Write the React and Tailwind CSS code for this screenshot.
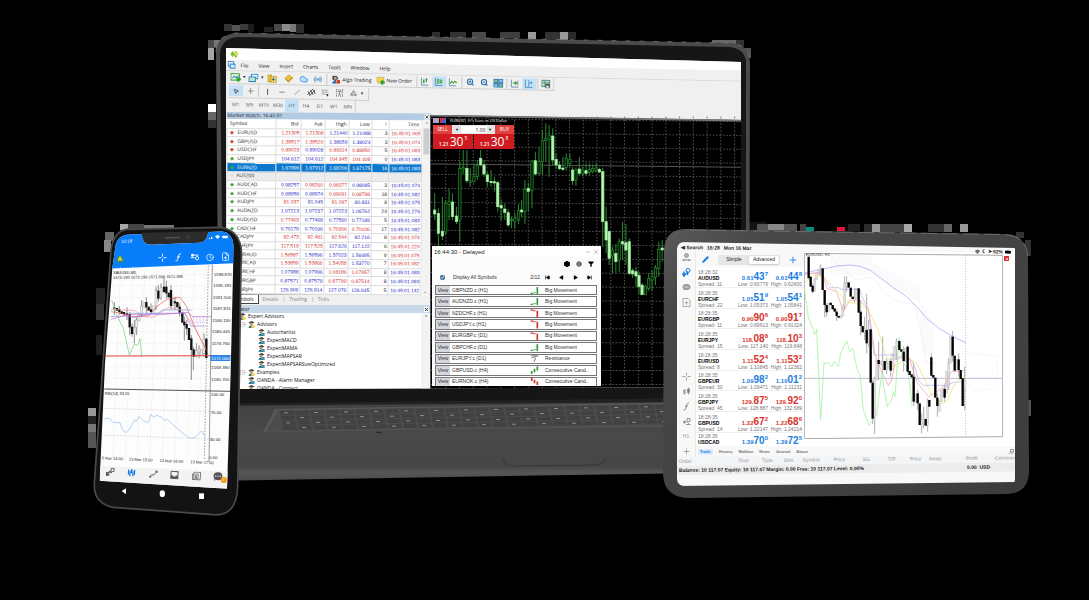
import React from "react";
import {
  ZoomIn, ZoomOut, MousePointer2, Plus, Minus, Slash, Cloud, Radio, BookMarked, Grid2x2, Type, Shapes, Settings, Circle,
  Filter, SkipBack, SkipForward, Play, Pencil, FilePlus, Clock, Wifi, Layers, Save, X,
} from "lucide-react";

const symbols = [
  ["EURUSD", "d", "1.21305r", "1.21308r", "1.21440b", "1.21088b", "3", "16:45:01.065r"],
  ["GBPUSD", "d", "1.38517r", "1.38520r", "1.38659b", "1.38024b", "3", "16:45:01.074r"],
  ["USDCHF", "d", "0.89023r", "0.89028b", "0.89314r", "0.88950r", "5", "16:45:01.083r"],
  ["USDJPY", "u", "104.612b", "104.612b", "104.845r", "104.408r", "0", "16:45:01.083b"],
  ["EURNZD", "u", "1.67896w", "1.67912w", "1.68206w", "1.67175w", "16", "16:45:01.083w"],
  ["AUS200", "n", "", "", "", "", "", ""],
  ["AUDCAD", "u", "0.98257b", "0.98260r", "0.98377r", "0.98085b", "3", "16:45:01.074b"],
  ["AUDCHF", "u", "0.68956b", "0.68974b", "0.69091r", "0.68798r", "18", "16:45:01.082b"],
  ["AUDJPY", "u", "81.037r", "81.045b", "81.097r", "80.831b", "8", "16:45:01.075b"],
  ["AUDNZD", "u", "1.07213b", "1.07237b", "1.07223b", "1.06762b", "24", "16:45:01.276b"],
  ["AUDUSD", "u", "0.77463r", "0.77468b", "0.77560b", "0.77189b", "5", "16:45:01.083b"],
  ["CADCHF", "u", "0.70179b", "0.70196b", "0.70306r", "0.70106r", "17", "16:45:01.082b"],
  ["CADJPY", "d", "82.473r", "82.481r", "82.544r", "82.216b", "8", "16:45:01.074r"],
  ["CHFJPY", "d", "117.519r", "117.525r", "117.626b", "117.122b", "6", "16:45:01.220r"],
  ["EURAUD", "u", "1.56587r", "1.56596b", "1.57023b", "1.56495b", "9", "16:45:01.075r"],
  ["EURCAD", "d", "1.53859r", "1.53866r", "1.54058r", "1.53770b", "7", "16:45:01.082r"],
  ["EURCHF", "u", "1.07988b", "1.07996b", "1.08186r", "1.07957r", "8", "16:45:01.083b"],
  ["EURGBP", "u", "0.87571b", "0.87579b", "0.87799r", "0.87514r", "8", "16:45:01.083b"],
  ["EURJPY", "u", "126.909b", "126.914b", "127.076b", "126.645b", "5", "16:45:01.142b"],
];
const ink = { r: "text-[#d02c2c]", b: "text-[#2626c4]", w: "text-white" };
const dot = { d: "text-[#d9482b]", u: "text-[#2fae2f]", n: "text-[#888]" };

const signals = [
  ["GBPNZD.c (H1)", "Big Movement", "up"], ["AUDNZD.c (H1)", "Big Movement", "up"],
  ["NZDCHF.c (H1)", "Big Movement", "down"], ["USDJPY.c (H1)", "Big Movement", "down"],
  ["EURGBP.c (D1)", "Big Movement", "down"], ["GBPCHF.c (D1)", "Big Movement", "up"],
  ["EURJPY.c (D1)", "Resistance", "flat"], ["GBPUSD.c (H4)", "Consecutive Cand..", "cup"],
  ["EURNOK.c (H4)", "Consecutive Cand..", "cdown"],
];

const quotes = [
  ["AUDUSD", "18:28:32", 11, ["0.61", "43", "7"], ["0.61", "44", "8"], "0.60779", "0.62800", 1],
  ["EURCHF", "18:28:35", 22, ["1.05", "51", "9"], ["1.05", "54", "1"], "1.05373", "1.05841", 1],
  ["EURGBP", "18:28:35", 11, ["0.90", "90", "6"], ["0.90", "91", "7"], "0.89613", "0.91324", 0],
  ["EURJPY", "18:28:35", 15, ["118.", "08", "8"], ["118.", "10", "3"], "117.140", "119.848", 0],
  ["EURUSD", "18:28:35", 8, ["1.11", "52", "4"], ["1.11", "53", "2"], "1.10845", "1.12362", 0],
  ["GBPEUR", "18:28:35", 30, ["1.09", "98", "2"], ["1.10", "01", "2"], "1.09471", "1.11231", 1],
  ["GBPJPY", "18:28:35", 45, ["129.", "87", "5"], ["129.", "92", "0"], "128.887", "132.689", 0],
  ["GBPUSD", "18:28:35", 14, ["1.22", "67", "2"], ["1.22", "68", "6"], "1.22147", "1.24214", 0],
  ["USDCAD", "18:28:35", null, ["1.39", "70", "0"], ["1.39", "72", "5"], null, null, 1],
];

// x, high, low, body top, body bottom, filled
const laptopCandles = [
  [27, 520, 600, 570, 582, 1], [38, 565, 680, 580, 640, 1], [50, 530, 660, 634, 648, 1], [60, 540, 645, 550, 636, 0],
  [70, 507, 600, 545, 553, 0], [80, 520, 600, 546, 590, 1], [92, 560, 612, 588, 605, 1], [102, 425, 665, 445, 600, 0],
  [112, 390, 462, 443, 447, 0], [123, 390, 490, 445, 482, 1], [133, 445, 500, 483, 487, 0], [144, 430, 488, 470, 485, 0],
  [154, 420, 480, 436, 470, 0], [164, 390, 437, 415, 435, 1], [174, 420, 470, 435, 462, 1], [184, 455, 500, 465, 485, 1],
  [195, 450, 500, 484, 488, 1], [205, 470, 515, 485, 489, 1], [215, 482, 575, 488, 560, 1], [225, 538, 600, 556, 564, 1],
  [236, 550, 600, 567, 577, 1], [246, 568, 622, 578, 615, 1], [256, 590, 625, 598, 602, 0], [266, 580, 626, 594, 604, 0],
  [277, 552, 612, 572, 600, 0], [286, 540, 592, 570, 576, 1], [296, 480, 612, 508, 575, 0], [306, 488, 575, 505, 514, 1],
  [317, 420, 565, 423, 512, 0], [327, 395, 465, 422, 462, 1], [338, 380, 465, 425, 460, 0], [348, 330, 465, 362, 425, 0],
  [358, 310, 425, 356, 362, 0], [368, 315, 470, 345, 358, 0], [379, 325, 437, 348, 420, 1], [389, 400, 447, 418, 435, 1],
  [399, 425, 450, 435, 446, 1], [409, 410, 452, 444, 448, 1], [419, 400, 452, 415, 442, 0], [430, 400, 440, 418, 430, 0],
  [438, 440, 495, 450, 482, 1], [448, 442, 497, 450, 480, 0], [458, 412, 465, 447, 460, 1], [468, 440, 468, 450, 460, 0],
  [478, 430, 465, 452, 460, 1], [488, 430, 465, 448, 458, 0], [498, 433, 460, 446, 455, 0], [508, 430, 458, 444, 452, 0],
  [518, 443, 460, 448, 456, 1], [528, 443, 680, 455, 605, 1], [538, 560, 700, 605, 660, 1], [547, 632, 735, 634, 715, 1],
  [557, 680, 760, 690, 708, 0], [567, 672, 760, 700, 725, 1], [577, 655, 755, 665, 720, 0], [587, 605, 720, 665, 672, 1],
  [597, 612, 735, 668, 690, 1], [607, 655, 765, 665, 760, 1], [617, 745, 775, 752, 762, 1], [627, 740, 800, 755, 768, 1],
  [636, 755, 822, 766, 800, 1], [645, 790, 826, 795, 824, 1], [655, 795, 826, 800, 824, 0], [665, 760, 812, 776, 805, 0],
  [675, 750, 812, 770, 780, 0], [685, 735, 795, 742, 772, 0], [695, 665, 770, 688, 745, 0], [705, 660, 725, 684, 690, 1],
  [715, 670, 705, 685, 693, 1],
];

const tabletBlack = [
  [26, 110, 175], [32, 170, 200], [38, 197, 215], [68, 145, 210], [74, 210, 255], [80, 255, 277], [92, 248, 255], [98, 255, 268],
  [104, 265, 275], [110, 275, 288], [116, 288, 293], [146, 187, 203], [152, 203, 230], [158, 230, 237], [176, 205, 278],
  [182, 275, 318], [188, 318, 337], [200, 330, 370], [212, 328, 488], [218, 488, 596], [236, 420, 432], [254, 423, 450],
  [272, 423, 452], [298, 363, 390], [304, 388, 395], [311, 395, 423], [323, 380, 455], [329, 453, 465], [335, 463, 472],
  [341, 470, 545], [353, 520, 550], [359, 550, 615], [377, 597, 617], [388, 540, 560], [394, 412, 467], [400, 465, 473],
  [406, 473, 533], [412, 533, 558], [434, 507, 533], [458, 350, 407], [464, 407, 452], [476, 418, 450], [482, 450, 477], [488, 475, 558],
];
const tabletGrey = [
  [44, 175, 215], [50, 165, 180], [56, 150, 165], [62, 143, 150], [86, 250, 275], [122, 285, 295], [128, 255, 290], [134, 190, 255],
  [140, 187, 200], [164, 232, 240], [170, 205, 235], [194, 325, 337], [206, 328, 372], [224, 475, 590], [230, 420, 480],
  [242, 425, 435], [248, 423, 435], [260, 430, 450], [266, 423, 445], [278, 400, 450], [284, 380, 420], [290, 365, 385],
  [317, 385, 425], [347, 522, 547], [365, 600, 617], [371, 597, 610], [383, 545, 615], [418, 540, 575], [424, 510, 545],
  [430, 505, 530], [440, 455, 520], [446, 430, 500], [452, 350, 430], [470, 418, 452], [494, 480, 500],
];
const tabletWicks = [
  [38, 190, 220], [62, 133, 170], [74, 210, 292], [80, 250, 290], [110, 268, 303], [134, 168, 270], [140, 170, 215], [164, 205, 248],
  [182, 240, 345], [194, 290, 360], [200, 222, 400], [206, 300, 380], [218, 480, 612], [224, 470, 642], [236, 365, 480],
  [248, 350, 460], [260, 415, 462], [272, 415, 470], [290, 355, 420], [311, 380, 455], [323, 375, 460], [341, 430, 558],
  [353, 510, 570], [365, 580, 640], [371, 560, 625], [383, 535, 635], [394, 400, 470], [412, 520, 590], [434, 495, 545],
  [446, 415, 510], [458, 333, 425], [476, 400, 470], [494, 440, 570],
];

const phoneBlack = [
  [88, 262, 266], [96, 264, 272], [103, 268, 276], [110, 274, 282], [117, 276, 284], [126, 280, 284], [134, 282, 322], [141, 320, 342],
  [184, 246, 262], [191, 260, 272], [198, 268, 276], [220, 212, 236], [237, 200, 216], [244, 200, 220], [251, 218, 232],
  [258, 210, 258], [270, 244, 250], [277, 246, 262], [284, 260, 278], [292, 278, 308], [298, 305, 316], [305, 312, 326],
  [312, 324, 360], [319, 355, 390], [326, 388, 410], [364, 356, 414],
];
const phoneGrey = [[148, 322, 340], [155, 300, 322], [162, 282, 304], [170, 258, 284], [177, 248, 262], [205, 258, 276], [213, 212, 258], [228, 202, 232], [264, 236, 256], [334, 392, 410], [342, 386, 396], [350, 388, 404], [357, 358, 400]];
const phoneWicks = [[88, 246, 285], [103, 258, 284], [126, 262, 300], [134, 276, 345], [141, 310, 350], [148, 300, 370], [155, 292, 345], [170, 240, 292], [184, 232, 280], [198, 250, 282], [213, 200, 270], [220, 195, 245], [228, 190, 240], [237, 175, 220], [244, 182, 235], [258, 195, 268], [270, 230, 270], [284, 250, 290], [298, 290, 362], [305, 300, 345], [319, 345, 480], [325, 380, 450], [334, 370, 412], [342, 375, 415], [357, 340, 410]];

const artifacts = [
  [224, 24, 8, 7, "#333"], [232, 25, 8, 6, "#555"], [240, 24, 8, 6, "#3b3b3b"], [248, 24, 6, 8, "#1d1d1d"], [274, 24, 8, 7, "#484848"],
  [282, 24, 8, 7, "#8b8b8b"], [290, 24, 6, 8, "#777"], [296, 24, 8, 9, "#2c2c2c"], [264, 27, 9, 5, "#222"], [208, 40, 9, 8, "#4a4a4a"],
  [208, 48, 6, 12, "#a5a5a5"], [214, 40, 8, 7, "#777"], [208, 104, 8, 8, "#fff"], [208, 112, 8, 8, "#666"], [208, 120, 8, 8, "#333"],
  [432, 32, 8, 6, "#2f2f2f"], [450, 32, 16, 7, "#333"], [472, 32, 14, 7, "#4a4a4a"], [500, 32, 20, 6, "#3f3f3f"], [528, 32, 8, 8, "#9a9a9a"],
  [545, 32, 16, 7, "#333"], [560, 32, 8, 8, "#999"], [568, 32, 8, 7, "#2b2b2b"], [712, 40, 24, 6, "#666"], [736, 40, 8, 8, "#333"],
  [744, 48, 7, 10, "#555"], [120, 224, 8, 6, "#aaa"], [128, 224, 16, 7, "#444"], [144, 225, 30, 5, "#777"], [105, 232, 9, 9, "#666"],
  [104, 240, 7, 12, "#888"], [96, 288, 9, 16, "#222"], [96, 304, 8, 16, "#333"], [96, 335, 6, 20, "#1f1f1f"], [88, 408, 8, 8, "#999"],
  [88, 416, 8, 8, "#222"], [88, 424, 8, 8, "#777"], [88, 432, 8, 16, "#555"], [741, 222, 26, 10, "#141414"], [757, 224, 40, 7, "#555"],
  [768, 224, 16, 6, "#888"], [806, 227, 8, 4, "#0d8c86"], [837, 227, 8, 4, "#e0123f"], [800, 224, 6, 8, "#444"], [848, 224, 12, 7, "#222"],
  [864, 224, 8, 8, "#2b2b2b"], [872, 224, 8, 8, "#999"], [880, 224, 24, 8, "#444"], [904, 224, 8, 8, "#aaa"], [928, 224, 24, 8, "#333"],
  [944, 224, 8, 8, "#666"], [960, 224, 8, 8, "#999"], [1016, 232, 8, 6, "#333"], [1025, 240, 6, 16, "#333"], [1028, 400, 3, 16, "#555"],
];

function Hardware() {
  const keys = [];
  for (let r = 0; r < 4; r++) {
    for (let c = 0; c < 28; c++) {
      const x = 280 - r * 3 + c * 15 + r * 4;
      const y = 411 + r * 5 - c * 0.25;
      keys.push(<path key={`k${r}-${c}`} d={`M${x} ${y}l13 -.2 1 4 -13 .3z`} fill="#414141" />);
      if ((c + r) % 2 === 0) keys.push(<rect key={`g${r}-${c}`} x={x + 4} y={y + 1.5} width="4" height="0.8" fill="#a0a0a0" />);
    }
  }
  return (
    <svg className="absolute left-0 top-0" width="1089" height="600" viewBox="0 0 1089 600" aria-hidden="true">
      <defs>
        <linearGradient id="base" x1="0" y1="0" x2="0" y2="1">
          <stop offset="0" stopColor="#414141" /><stop offset="0.45" stopColor="#494949" />
          <stop offset="0.82" stopColor="#464646" /><stop offset="0.9" stopColor="#565656" /><stop offset="1" stopColor="#4a4a4a" />
        </linearGradient>
        <clipPath id="deck"><path d="M278 410L700 403V425L266 431.500z" /></clipPath>
      </defs>
      {artifacts.map(([x, y, w, h, f]) => <rect key={`${x}-${y}`} x={x} y={y} width={w} height={h} fill={f} />)}
      <path d="M216 52Q217 35 236 33L732 43Q749 46 750 62L749 400L219 404z" fill="#4b4b4b" />
      <path d="M220 54Q221 38 238 37L730 47Q745 49 746 62L746 400L224 404z" fill="#161616" />
      <path d="M216 52Q217 35 236 33L732 43Q749 46 750 62" fill="none" stroke="#777" strokeWidth="0.8" strokeDasharray="5 9" />
      <path d="M205 405L700 399V473L205 481z" fill="url(#base)" />
      <path d="M205 404L700 398V402L205 406z" fill="#222" />
      <path d="M275 409L700 402V426L263 432z" fill="#585858" />
      <g clipPath="url(#deck)"><path d="M278 410L700 403V428L266 432z" fill="#4c4c4c" />{keys}</g>
      <path d="M376 432l6 1" stroke="#222" strokeWidth="1" />
      <path d="M503 459Q505 466 513 466L596 465Q604 464 606 457" fill="#474747" stroke="#363636" strokeWidth="1" />
    </svg>
  );
}

function Tool({ label, on, className = "w-[14px]", children }) {
  return (
    <button aria-label={label} className={`flex h-[11px] shrink-0 items-center justify-center ${on ? "bg-[#c4e0f5]" : ""} ${className}`}>
      {children}
    </button>
  );
}
const Sep = () => <span className="mx-px h-[11px] w-px shrink-0 bg-[#c8c8c8]" />;
const Caret = () => <span className="text-[4px] leading-none text-[#222]">▼</span>;

function WindowHeader() {
  return (
    <header className="w-[540px] shrink-0 origin-top-left rotate-[1.200deg] font-['Open_Sans',sans-serif] text-[5px] leading-none text-[#111]">
      <div className="-mt-2 flex h-5 items-end bg-white px-1 pb-[2px]">
        <svg width="9" height="8" viewBox="0 0 18 16" role="img" aria-label="OANDA">
          <path d="M2 6l4-4 4 5 5 6-4 2-3-6-2 5-4-4z" fill="#86b92c" /><path d="M8 1l6 1 3 6-2 4z" fill="#c7d93b" />
        </svg>
      </div>
      <nav className="flex h-[11px] items-center gap-[10px] border-b border-[#dadada] bg-[#f0f0f0] pl-[2px] font-medium">
        <svg width="8" height="8" viewBox="0 0 16 16" aria-hidden="true" className="-mr-[5px]"><rect x="1" y="1" width="11" height="9" fill="#fff" stroke="#2b82c9" strokeWidth="2" /><rect x="5" y="6" width="10" height="8" fill="#d9edfb" stroke="#2b82c9" strokeWidth="2" /></svg>
        {["File", "View", "Insert", "Charts", "Tools", "Window", "Help"].map((m) => <button key={m}>{m}</button>)}
      </nav>
      <div className="flex h-[13px] items-center bg-[#f0f0f0] pl-1">
        <div className="flex h-[13px] items-center border-r border-b border-[#cfcfcf]">
          <Tool label="New chart" className="w-[13px]">
            <svg width="11" height="9" viewBox="0 0 22 18"><rect x="1" y="1" width="17" height="13" fill="#e9f8e5" stroke="#33a02c" strokeWidth="2" /><path d="M4 10l4-4 3 3 5-4" stroke="#2b82c9" strokeWidth="2" fill="none" /><path d="M16 8v9M12 12h9" stroke="#2aa52a" strokeWidth="4" /></svg>
          </Tool>
          <Caret />
          <Tool label="Profiles"><svg width="10" height="9" viewBox="0 0 20 18"><rect x="6" y="1" width="13" height="9" fill="#d9edfb" stroke="#2b82c9" strokeWidth="2" /><rect x="1" y="7" width="13" height="9" fill="#bfe8c4" stroke="#2b82c9" strokeWidth="2" /></svg></Tool>
          <Caret />
          <Tool label="Market" className="w-[17px]"><svg width="10" height="9" viewBox="0 0 20 18"><rect x="1" y="2" width="7" height="14" fill="#f1c232" stroke="#a47c10" /><rect x="7" y="5" width="11" height="12" fill="#f6d65a" stroke="#a47c10" /><path d="M12 7v7M9 11h6" stroke="#2b72b8" strokeWidth="2" /></svg></Tool>
          <Tool label="Navigator" className="w-[15px]"><svg width="9" height="9" viewBox="0 0 18 18"><path d="M9 1l8 6-9 9-7-8z" fill="#eec434" stroke="#a47c10" /><path d="M3 9l5 5 7-7" stroke="#7a5c0b" fill="none" /></svg></Tool>
          <Tool label="Cloud" className="w-[15px]"><Cloud size={9} color="#2b86d1" fill="#bfe3ff" /></Tool>
          <Tool label="Signals"><Radio size={9} color="#2980c9" /></Tool>
          <Sep />
          <button className="flex shrink-0 items-center gap-[2px] pl-[3px]">
            <svg width="9" height="9" viewBox="0 0 18 18" aria-hidden="true"><path d="M2 1h8l4 5-6 6-6-4z" fill="#41464d" /><circle cx="8" cy="6" r="3" fill="#d8a074" /><path d="M1 16q2-6 8-5l2 6z" fill="#2c70b5" /><circle cx="14" cy="13" r="4" fill="#d53b2c" /></svg>
            Algo Trading
          </button>
          <button className="flex shrink-0 items-center gap-px pr-[3px] pl-[5px]">
            <svg width="9" height="9" viewBox="0 0 18 18" aria-hidden="true"><path d="M1 2h14v9H9l-5 4v-4H1z" fill="#f3d35a" stroke="#b8912a" /><path d="M12 8v9M8 12.500h9" stroke="#28a528" strokeWidth="4" /></svg>
            New Order
          </button>
          <Sep />
          <Tool label="Bars"><svg width="9" height="9" viewBox="0 0 18 18"><path d="M2 1v15h14" stroke="#4578a5" strokeWidth="1.500" fill="none" /><path d="M7 4v8M5 9h2M12 2v8M12 4h2" stroke="#2ca02c" strokeWidth="2.500" /></svg></Tool>
          <Tool label="Candles" on><svg width="9" height="9" viewBox="0 0 18 18"><path d="M2 1v15h14" stroke="#4578a5" strokeWidth="1.500" fill="none" /><path d="M6 4h3v8H6zM12 5h3v6h-3z" stroke="#2ca02c" strokeWidth="1.800" fill="#fff" /></svg></Tool>
          <Tool label="Line"><svg width="9" height="9" viewBox="0 0 18 18"><path d="M2 1v15h14" stroke="#4578a5" strokeWidth="1.500" fill="none" /><path d="M3 12l4-5 3 4 3-4 4 3" stroke="#2ca02c" strokeWidth="2" fill="none" /></svg></Tool>
          <Sep />
          <Tool label="Zoom in"><ZoomIn size={8} strokeWidth={3} color="#2b6ca8" /></Tool>
          <Tool label="Zoom out"><ZoomOut size={8} strokeWidth={3} color="#2b6ca8" /></Tool>
          <Tool label="Tile"><svg width="10" height="9" viewBox="0 0 20 18"><path d="M1 1h8v7H1zM11 10h8v7h-8z" fill="#7cc47c" stroke="#2c78b8" strokeWidth="2" /><path d="M11 1h8v7h-8zM1 10h8v7H1z" fill="#8cc4ea" stroke="#2c78b8" strokeWidth="2" /></svg></Tool>
          <Sep />
          <Tool label="Shift"><svg width="9" height="9" viewBox="0 0 18 18"><path d="M2 1v15h14M15 3v10" stroke="#4578a5" strokeWidth="1.500" fill="none" /><path d="M5 8h7M9 5l4 3-4 3" stroke="#2ca02c" strokeWidth="2" fill="none" /></svg></Tool>
          <Tool label="Scroll" on><svg width="9" height="9" viewBox="0 0 18 18"><path d="M2 1v15h14M9 2v12" stroke="#2c78b8" strokeWidth="1.500" fill="none" /><path d="M11 7l4-3v6z" fill="#2c78b8" /></svg></Tool>
          <Sep />
          <Tool label="Save template"><svg width="9" height="9" viewBox="0 0 18 18"><rect x="1" y="1" width="16" height="13" fill="#bfe0c4" stroke="#55798f" strokeWidth="2" /><path d="M2 6h14M7 2v11" stroke="#3a9a50" strokeWidth="1.500" /><rect x="8" y="8" width="9" height="9" fill="#4a5560" /><rect x="10" y="12" width="5" height="4" fill="#eee" /></svg></Tool>
        </div>
      </div>
      <div className="flex h-[14px] items-center bg-[#f0f0f0] pl-1">
        <div className="flex h-[13px] items-center border-r border-b border-[#cfcfcf] text-[#555]">
          <Tool label="Cursor" on><MousePointer2 size={6} color="#444" strokeWidth={3} /></Tool>
          <Tool label="Crosshair"><Plus size={9} strokeWidth={1.5} /></Tool>
          <Sep />
          <Tool label="Vertical line" className="w-[15px]"><span className="h-[6px] w-px bg-[#555]" /></Tool>
          <Tool label="Horizontal line"><Minus size={8} /></Tool>
          <Tool label="Trend line" className="w-[15px]"><Slash size={6} /></Tool>
          <Tool label="Channel"><svg width="9" height="9" viewBox="0 0 18 18"><path d="M1 14L12 2M5 16L16 4M2 7l4 8M7 5l5 9M13 4l3 8" stroke="#444" strokeWidth="1.800" fill="none" /></svg></Tool>
          <Tool label="Fibonacci"><svg width="8" height="8" viewBox="0 0 16 16"><path d="M1 2h13M1 6h13M1 10h9" stroke="#777" strokeWidth="1.800" strokeDasharray="2 1" /><path d="M10 10h5l-2 5z" fill="#222" /></svg></Tool>
          <Tool label="Text"><span className="flex h-[7px] w-[7px] items-center justify-center border border-dotted border-[#777]"><Type size={5} strokeWidth={3} /></span></Tool>
          <Tool label="Shapes"><Shapes size={7} /></Tool>
          <span className="pr-1"><Caret /></span>
        </div>
      </div>
      <div className="flex h-[16px] items-start bg-[#f0f0f0] pl-1 text-[#555]">
        <div className="flex items-center border-r border-[#cfcfcf]">
          {["M1", "M5", "M15", "M30", "H1", "H4", "D1", "W1", "MN"].map((t) => (
            <button key={t} className={`h-[13px] w-[14px] ${t === "H1" ? "bg-[#c4e0f5]" : ""}`}>{t}</button>
          ))}
        </div>
      </div>
    </header>
  );
}

function MarketWatch() {
  return (
    <section className="flex flex-col">
      <div className="origin-left rotate-[0.400deg]">
        <h2 className="flex h-[7px] items-center justify-between bg-[#b4cbe4] px-px font-['Open_Sans',sans-serif] text-[5px] leading-none text-[#222]">
          Market Watch: 16:45:01 <X size={5} strokeWidth={4} className="bg-white" />
        </h2>
        <div className="flex bg-white">
          <table className="h-[175px] w-[195px] table-fixed border-collapse font-['Liberation_Sans',sans-serif] text-[5px] leading-none">
            <colgroup>
              <col className="w-[49px]" /><col className="w-[25px]" /><col className="w-[24px]" /><col className="w-[24px]" />
              <col className="w-[23px]" /><col className="w-[17px]" /><col className="w-[33px]" />
            </colgroup>
            <thead>
              <tr className="font-['Open_Sans',sans-serif] text-[#222]">
                {["Symbol", "Bid", "Ask", "High", "Low", "!", "Time"].map((h, i) => (
                  <th key={h} className={`h-[9px] border-r border-[#ddd] p-0 font-medium ${i ? "pr-[2px] text-right" : "pl-[3px] text-left"}`}>{h}</th>
                ))}
              </tr>
            </thead>
            <tbody>
              {symbols.map(([name, dir, ...cells]) => {
                const active = name === "EURNZD";
                return (
                  <tr key={name} className={active ? "bg-[#0b78d0] text-white" : name === "AUS200" ? "bg-[#ececec] text-[#333]" : "text-[#222]"}>
                    <td className="border border-[#dcdcdc] p-0 pl-[3px] font-['Open_Sans',sans-serif]">
                      <span className={`mr-[3px] ${dot[dir]}`}>{dir === "n" ? "○" : "◆"}</span>{name}
                    </td>
                    {cells.map((c, i) => (
                      <td key={i} className={`border border-[#dcdcdc] p-0 pr-px text-right whitespace-nowrap ${i === 4 ? "" : ink[c.slice(-1)] || ""}`}>
                        {i === 4 ? c : c.slice(0, -1)}
                      </td>
                    ))}
                  </tr>
                );
              })}
            </tbody>
          </table>
          <div className="flex w-[8px] flex-col items-center justify-between bg-[#f3f3f3] text-[#444]">
            <span className="text-[5px] leading-[8px]">⌃</span>
            <span className="mb-auto h-[26px] w-[6px] bg-[#cdcdcd]" />
            <span className="text-[5px] leading-[8px]">⌄</span>
          </div>
        </div>
      </div>
      <div className="flex h-[10px] items-center border-t border-[#777] bg-[#f0f0f0] pl-[8px] font-['Open_Sans',sans-serif] text-[5px] leading-none text-[#888]">
        <button className="h-[9px] border-r border-b border-[#444] bg-white pr-1 text-[#222]">Symbols</button>
        <button className="px-1">Details</button>|<button className="px-1">Trading</button>|<button className="px-1">Ticks</button>
      </div>
    </section>
  );
}

function ExpertIcon({ folder }) {
  return (
    <svg width="7" height="7" viewBox="0 0 14 14" aria-hidden="true" className="shrink-0">
      <path d="M1 3l6-3 6 3-6 3z" fill="#3c3c3c" /><circle cx="6" cy="6" r="3" fill="#b98f66" /><path d="M1 14q0-6 6-5l1 5z" fill="#37709b" />
      <path d="M7 8h6v6H7z" fill={folder ? "#f2cc48" : "#2b88c4"} />{!folder && <path d="M8 9l4 4" stroke="#7bbb3f" strokeWidth="2" />}
    </svg>
  );
}

function Navigator() {
  const rows = [
    ["Expert Advisors", "pl-[13px]", 1], ["Advisors", "pl-[13px]", 2], ["Autochartist", "pl-[32px]"], ["ExpertMACD", "pl-[32px]"],
    ["ExpertMAMA", "pl-[32px]"], ["ExpertMAPSAR", "pl-[32px]"], ["ExpertMAPSARSizeOptimized", "pl-[32px]"],
    ["Examples", "pl-[13px]", 2], ["OANDA - Alarm Manager", "pl-[22px]"], ["OANDA - Connect", "pl-[22px]"],
  ];
  return (
    <section className="mt-px bg-white font-['Open_Sans',sans-serif] text-[5px] leading-none text-[#111]">
      <h2 className="flex h-[8px] items-center justify-between bg-[#c8d8e8] pr-px pl-px">Navigator <X size={5} strokeWidth={4} className="bg-white" /></h2>
      <div className="flex">
        <ul className="grid h-[79px] flex-1 auto-rows-fr">
          {rows.map(([t, pad, folder]) => (
            <li key={t} className={`flex items-center gap-[2px] ${pad}`}>
              {folder === 2 && <svg width="7" height="7" viewBox="0 0 14 14" aria-hidden="true"><rect x="3" y="3" width="8" height="8" fill="#fff" stroke="#aaa" /><path d="M5 7h4M11 7h3" stroke="#777" /></svg>}
              <ExpertIcon folder={folder} />{t}
            </li>
          ))}
        </ul>
        <span className="w-[9px] bg-[#f3f3f3] text-center leading-[8px]">⌃</span>
      </div>
    </section>
  );
}

function LaptopChart() {
  return (
    <svg className="block h-[275px] w-full" viewBox="16 285 930 825" preserveAspectRatio="none" role="img" aria-label="EURUSD hourly chart">
      <path d="M16 285L946 300V1110H16z" fill="#000" />
      <g stroke="#5e5e5e" strokeWidth="2.500" strokeDasharray="5 5" fill="none">
        {Array.from({ length: 22 }, (_, i) => <path key={i} d={`M${60 + i * 41} 290V1110`} />)}
        {Array.from({ length: 20 }, (_, i) => <path key={i} d={`M16 ${295 + i * 42}L946 ${305 + i * 41.500}`} />)}
      </g>
      <path d="M16 432L946 442" stroke="#555" strokeWidth="3" />
      {laptopCandles.map(([x, h, l, t, b, f]) => (
        <g key={x}><path d={`M${x} ${h}V${l}`} stroke="#2a8a30" strokeWidth="3" /><rect x={x - 3.5} y={t} width="7" height={b - t} fill={f ? "#b4f7b0" : "#031c03"} stroke={f ? "#9aea98" : "#2a8f32"} strokeWidth="2" /></g>
      ))}
      <path d="M16 287L946 302V1110" stroke="#777" strokeWidth="5" fill="none" />
    </svg>
  );
}

function SignalGlyph({ kind }) {
  const d = {
    up: ["M1 13h4M6 12h4", "#2e9c3a", "M13 2v12"], down: ["M1 2h5M6 3h4", "#d63434", "M13 3v12"], flat: ["M1 3h14M3 7l11-4M7 14l3-7", "#888", ""],
    cup: ["", "#2e9c3a", "M3 9v5M8 5v6M13 1v7"], cdown: ["", "#d63434", "M3 1v6M8 5v6M13 8v6"],
  }[kind];
  return <svg width="9" height="9" viewBox="0 0 16 16" aria-hidden="true" className="shrink-0"><path d={d[0]} stroke={d[1]} strokeWidth="2" fill="none" /><path d={d[2]} stroke={d[1]} strokeWidth="3" /></svg>;
}

function SignalWindow() {
  return (
    <section className="absolute left-px top-[131px] flex h-[140px] w-[169px] flex-col overflow-hidden bg-[#fbfbfb] font-['Liberation_Sans',sans-serif] text-[5px] leading-none text-[#333]">
      <div className="flex h-[11px] shrink-0 items-center justify-between bg-white px-[2px] text-[#222]">
        <h2 className="text-[6px]">16:44:30 - Delayed</h2><span className="flex gap-[2px] text-[#888]"><Minus size={6} /><X size={6} /></span>
      </div>
      <div className="flex h-[13px] shrink-0 items-center justify-end gap-[6px] pr-[7px] text-black">
        <Settings size={6} strokeWidth={6} /><Circle size={6} fill="#777" color="#666" /><Filter size={6} fill="#000" />
      </div>
      <div className="flex h-[15px] shrink-0 items-center pr-[9px] pl-[8px]">
        <label className="flex flex-1 items-center gap-[8px]">
          <input type="checkbox" defaultChecked className="h-[5px] w-[5px] accent-[#4b6da0]" />Display All Symbols
        </label>
        <span className="mr-[5px]">2/12</span>
        <span className="flex gap-[9px] text-black">
          <SkipBack size={5} fill="#000" strokeWidth={3} /><Play size={5} fill="#000" className="rotate-180" /><Play size={5} fill="#000" /><SkipForward size={5} fill="#000" strokeWidth={3} />
        </span>
      </div>
      <ul className="grid h-[103px] shrink-0 auto-rows-fr pr-[4px] pl-[3px]">
        {signals.map(([s, m, k]) => (
          <li key={s} className="mb-px flex items-center border border-[#777] bg-white">
            <button className="h-full w-[14px] shrink-0 bg-[#d4d8de]">View</button>
            <span className="w-[80px] shrink-0 pl-[2px]">{s}</span>
            <SignalGlyph kind={k} />
            <span className="pl-[6px] whitespace-nowrap">{m}</span>
          </li>
        ))}
      </ul>
    </section>
  );
}

function TradeWidget() {
  return (
    <div className="absolute left-[2px] top-[2px] w-[81px] font-['Open_Sans',sans-serif] leading-none text-white">
      <div className="flex h-[7px] items-center gap-px text-[4px] whitespace-nowrap">
        <span className="h-[5px] w-[6px] bg-[#b9a0c9]" /><span className="mr-[3px] h-[5px] w-[6px] bg-[linear-gradient(135deg,#d83434_50%,#3c63d8_50%)]" />EURUSD, H1: Euro vs US Dollar
      </div>
      <div className="mt-px flex h-[9px] text-[5px]">
        <button className="w-[19px] bg-[#e04242]">SELL</button>
        <span className="flex flex-1 items-center justify-between bg-[#e4e4e4] px-[3px] text-[#222]">
          <Caret />
          <input aria-label="Volume" defaultValue="1.00" className="h-[7px] w-[26px] bg-white pr-px text-right" />
          <Caret />
        </span>
        <button className="w-[19px] bg-[#e04242]">BUY</button>
      </div>
      <div className="flex gap-px">
        {[["1.21", "30", "5"], ["1.21", "30", "8"]].map(([a, b, c]) => (
          <div key={c} className="flex h-[15px] flex-1 items-end justify-center gap-px bg-[#cf1a20] pb-[2px]">
            <span className="text-[5px] font-semibold">{a}</span><span className="text-[12px] leading-[11px]">{b}</span><span className="self-start pt-[2px] text-[5px]">{c}</span>
          </div>
        ))}
      </div>
    </div>
  );
}

function Laptop() {
  return (
    <main className="absolute left-[226px] top-[48px] flex h-[341px] w-[517px] flex-col bg-[#f0f0f0] [clip-path:polygon(0_0,515px_14px,515px_339px,0_341px)]">
      <WindowHeader />
      <div className="-mt-[2px] flex flex-1">
        <div className="w-[204px] shrink-0"><MarketWatch /><Navigator /></div>
        <div className="relative mt-[3px] flex-1 border-l border-[#555]">
          <LaptopChart />
          <TradeWidget />
          <SignalWindow />
        </div>
      </div>
    </main>
  );
}

function Price({ p, blue }) {
  return (
    <span className={`flex h-[10px] items-end justify-end ${blue ? "text-[#1a7de0]" : "text-[#d8352b]"} leading-none font-bold`}>
      <span className="text-[6px]">{p[0]}</span><span className="text-[10px] leading-[9px]">{p[1]}</span><span className="self-start text-[6px]">{p[2]}</span>
    </span>
  );
}

function TabletChart() {
  return (
    <svg className="block h-[186px] w-[199px]" viewBox="12 99 597 558" role="img" aria-label="EURUSD chart">
      <path d="M13 100L608 106V650L13 656z" fill="#fff" stroke="#aaa" strokeWidth="3" />
      <g fill="none" strokeWidth="1.500">
        <g stroke="#f1ecf4">{Array.from({ length: 52 }, (_, i) => { const x = 95 + i * 6; const t = x < 220 ? 105 : x < 360 ? 130 + (x - 220) * 0.5 : 245 + (x - 360) * 1.5; return <path key={i} d={`M${x} ${Math.min(t, 370)}V${x < 360 ? 165 + Math.max(0, x - 220) * 0.6 : 400}`} />; })}</g>
        <path d="M90 104L110 130 135 155 170 180 215 170 245 205 280 240 345 255 362 330 380 430 410 430" stroke="#f3dfe6" />
        <path d="M500 400L530 403 560 405 592 407V485L575 507 520 512 500 490" stroke="#f3dfe6" strokeDasharray="4 3" />
        <path d="M13 475H608" stroke="#a7b4d0" strokeWidth="2.500" />
        <path d="M497 104V650" stroke="#aaa" strokeWidth="2" strokeDasharray="4 4" />
        {tabletWicks.map(([x, a, b]) => <path key={x} d={`M${x} ${a}V${b}`} stroke="#777" strokeWidth="1.800" />)}
      </g>
      {tabletGrey.map(([x, a, b]) => <rect key={x} x={x - 3} y={a} width="6" height={b - a} fill="#ddd" stroke="#b5b5b5" />)}
      <g fill="none" strokeWidth="2.200">
        <path d="M13 160L30 155 65 148 110 138 150 135 180 139 210 150 240 173 280 203 320 230 350 260 380 295 420 327 450 345 475 358 497 368" stroke="#a5a5ee" />
        <path d="M13 160H65L80 185 90 203H115L125 208H180L185 230 205 265 222 405H290L295 412 330 415 345 440 355 480 370 496H440L460 487 497 485" stroke="#b4b4f2" />
        <path d="M13 165L65 155 80 205 110 215 130 275 150 240 180 240 205 270 215 330 225 405 245 455 265 497 275 480 285 430 310 400 330 420 350 485 385 530 410 515 430 500 455 455 497 452" stroke="#f5a0a5" />
        <path d="M13 190L40 165 70 170 100 200 140 245 185 255 210 280 235 330 255 400 280 440 300 430 320 410 350 430 375 480 395 525 425 550 440 545 460 500 475 480 497 470" stroke="#f3e26c" />
        <path d="M13 205L25 290 30 305 40 330 43 345 50 328 62 598 72 430 85 428 95 440 103 423 115 440 122 400 140 362 150 395 158 385 172 450 180 465 190 570 207 615 215 605 230 585 240 500 245 460 262 560 275 540 280 515 285 530 297 355 310 430 320 440 330 500 336 560" stroke="#9af09a" />
      </g>
      {tabletBlack.map(([x, a, b]) => <rect key={x} x={x - 3.5} y={a} width="7" height={b - a} fill="#000" />)}
      <text x="17" y="109" fontSize="12" fill="#333" fontFamily="Liberation Sans, sans-serif">EURUSD, H1</text>
    </svg>
  );
}

const iconProps = { width: 9, height: 9, viewBox: "0 0 18 18", "aria-hidden": true };

function Tablet() {
  return (
    <aside className="absolute left-[677px] top-[242px] flex h-[244px] w-[338px] flex-col rounded-[7px] bg-[#f8f8f8] font-['Liberation_Sans',sans-serif] text-[5px] leading-none text-[#777] [clip-path:polygon(0_0,338px_6px,338px_240px,0_244px)]">
      <div className="flex h-[10px] shrink-0 origin-left rotate-[0.800deg] items-center justify-between px-[4px] font-bold text-[#222]">
        <span className="flex gap-[4px]"><span>◀ Search</span><span>16:28</span><span>Mon 16 Mar</span></span>
        <span className="flex items-center gap-[2px]"><Wifi size={5} strokeWidth={4} /> ☾ ➤ 92% <span className="h-[3px] w-[6px] rounded-[1px] bg-black" /></span>
      </div>
      <div className="flex h-[205px] shrink-0">
        <div className="flex w-[19px] shrink-0 flex-col items-center justify-between border-r border-[#e8e8e8]">
          <div className="flex flex-col items-center gap-[6px] pt-px">
            <svg {...iconProps}><circle cx="9" cy="5" r="4" fill="#b5b5b5" stroke="#888" strokeWidth="1.500" /><path d="M1 14h5M7 14h4M12 14h5" stroke="#888" strokeWidth="3" /></svg>
            <svg {...iconProps}><path d="M4 7v7M1 11l3 5 4-5M11 14V9M9 11l3-4" stroke="#1a7de0" strokeWidth="3" fill="none" /><circle cx="12" cy="5" r="4" fill="none" stroke="#1a7de0" strokeWidth="2" /></svg>
            <svg {...iconProps}><path d="M9 2q8 0 8 6t-8 6q-2 0-4-1l-3 2 1-3q-2-2-2-4 0-6 8-6z" fill="#999" /><path d="M5 8h2M8 8h2M11 8h2" stroke="#fff" strokeWidth="2" /></svg>
            <svg {...iconProps}><path d="M2 1h10l4 4v12H2zM9 6v7M5.500 9.500h7" fill="none" stroke="#999" strokeWidth="1.600" /></svg>
          </div>
          <div className="flex flex-col items-center gap-[6px] pb-px">
            <svg {...iconProps}><path d="M9 1v6M9 11v6M1 9h6M11 9h6" stroke="#999" strokeWidth="1.800" /></svg>
            <svg {...iconProps}><path d="M3 6h4v7H3zM5 4v11" fill="none" stroke="#999" strokeWidth="1.500" /><path d="M11 4h4v7h-4zM13 1v14" fill="#888" stroke="#888" strokeWidth="1.500" /></svg>
            <svg {...iconProps}><path d="M14 2q-4-1-5 4l-2 8q-1 3-4 2M6 8h6" fill="none" stroke="#888" strokeWidth="1.800" /></svg>
            <svg {...iconProps}><circle cx="5" cy="10" r="3" fill="#999" /><path d="M10 3h6v6h-6zM8 15h9M11 11l3 3" stroke="#888" strokeWidth="1.800" fill="none" /></svg>
            <span className="flex h-[9px] items-center text-[#999]">H1</span>
            <Plus size={9} strokeWidth={1.5} />
          </div>
        </div>
        <div className="flex min-w-0 flex-1 flex-col">
          <div className="flex h-[195px] shrink-0">
            <div className="w-[108px] shrink-0">
              <div className="flex h-[15px] items-center">
                <button aria-label="Edit" className="w-[22px] pl-[6px]"><Pencil size={7} color="#1a7de0" fill="#1a7de0" /></button>
                <div className="flex h-[10px] w-[62px] rounded-[2px] bg-[#e6e6e6] p-px text-[#222]">
                  <button className="flex-1">Simple</button><button className="flex-1 rounded-[2px] bg-white shadow-sm">Advanced</button>
                </div>
                <button aria-label="Add symbol" className="pl-[8px]"><Plus size={10} color="#1a7de0" /></button>
              </div>
              <ul className="h-[179px] overflow-hidden bg-white">
                {quotes.map(([s, t, sp, b, a, lo, hi, blue], n) => (
                  <li key={s} className={`grid grid-cols-[36px_34px_34px] border-[#f0f0f0] pl-[2px] ${lo ? "items-end border-b" : "items-start"} ${!lo ? "h-[13px]" : n % 3 === 2 ? "h-[20px]" : "h-[21px]"}`}>
                    <div className="leading-[6px]"><p>{t}</p><p className="font-bold text-black">{s}</p>{sp && <p>Spread: {sp}</p>}</div>
                    <div className={`text-right ${lo ? "" : "pt-[2px]"}`}><Price p={b} blue={blue} />{lo && <p className="leading-[6px] whitespace-nowrap">Low: {lo}</p>}</div>
                    <div className={`text-right ${lo ? "" : "pt-[2px]"}`}><Price p={a} blue={blue} />{hi && <p className="leading-[6px] whitespace-nowrap">High: {hi}</p>}</div>
                  </li>
                ))}
              </ul>
            </div>
            <div className="flex flex-1 gap-px bg-white pt-px">
              <TabletChart />
              <button aria-label="Close chart" className="mt-[3px] flex h-[5px] w-[5px] items-center justify-center bg-[#e02b2b]"><X size={4} color="#fff" strokeWidth={4} /></button>
            </div>
          </div>
          <nav className="flex h-[10px] items-center gap-[6px] pl-[2px] text-[4px] font-bold">
            <button className="rounded-[1px] bg-[#d8eafc] px-[2px] py-px text-[#1a7de0]">Trade</button>
            {["History", "Mailbox", "News", "Journal", "About"].map((t) => <button key={t}>{t}</button>)}
            <svg width="7" height="7" viewBox="0 0 14 14" aria-hidden="true" className="ml-auto"><path d="M5 1h6v5H5zM2 13V8h7v5zM10 10h4" fill="none" stroke="#777" strokeWidth="1.500" /></svg>
          </nav>
        </div>
      </div>
      <div className="origin-left -rotate-[0.600deg]">
        <div className="flex h-[9px] items-center bg-[#f3f5f7] pl-[2px] text-[#999]">
          <span className="w-[59px]">Order</span><span className="w-[24px]">Time</span><span className="w-[22px]">Type</span><span className="w-[19px]">Size</span>
          <span className="w-[31px]">Symbol</span><span className="w-[29px]">Price</span><span className="w-[25px]">S/L</span><span className="w-[22px]">T/P</span>
          <span className="w-[19px]">Price</span><span className="w-[37px]">Swap</span><span className="w-[29px]">Profit</span><span>Commen</span>
        </div>
        <div className="flex h-[9px] items-center justify-between bg-[#ececec] pr-[25px] pl-[2px] font-bold whitespace-nowrap text-[#222]">
          <span>Balance: 10 117.07 Equity: 10 117.07 Margin: 0.00 Free: 10 117.07 Level: 0.00%</span><span>0.00&nbsp; USD</span>
        </div>
      </div>
    </aside>
  );
}

function Phone() {
  const prices = ["1598.870", "1595.185", "1591.500", "1587.815", "1584.130", "1580.445", "1576.760"];
  return (
    <aside className="absolute left-[85px] top-[220px] h-[300px] w-[160px]">
      <svg className="absolute inset-0 h-full w-full" viewBox="0 0 480 900" role="img" aria-label="Gold chart">
        <defs><clipPath id="glass"><path d="M125 44L170 42Q172 74 196 74L345 68Q366 66 370 36L410 34Q442 38 446 75L437 460 426 806 44 782 60 430 82 145 92 75Q98 48 125 44z" /></clipPath></defs>
        <path d="M125 28L400 22Q455 24 468 80Q471 100 468 140L458 800Q455 890 385 884L85 862Q25 850 28 790L78 90Q85 35 125 28z" fill="#131313" stroke="#4a4a4a" strokeWidth="5" />
        <path d="M170 38Q172 76 196 76L345 70Q366 68 372 34z" fill="#2c2c2c" />
        <path d="M240 54L285 52" stroke="#555" strokeWidth="4" /><circle cx="308" cy="51" r="6" fill="#34343c" stroke="#555" />
        <g clipPath="url(#glass)">
          <path d="M40 20H460V900H40z" fill="#fdfdfd" />
          <path d="M40 20H460V129L40 147z" fill="#087dfa" />
          <g stroke="#e4e4e4" strokeWidth="1.500" strokeDasharray="5 3" fill="none">
            {[95, 132, 168, 205, 243, 280, 318, 350].map((x) => <path key={x} d={`M${x + 12} 140L${x - 12} 725`} />)}
            {[164, 198, 233, 267, 300, 335, 370, 440, 475].map((y) => <path key={y} d={`M50 ${y}H382`} />)}
          </g>
          <g stroke="#bbb" strokeWidth="1.500" strokeDasharray="5 4"><path d="M55 565L376 575" /><path d="M50 645L376 657" /></g>
          <path d="M370 136L358 720" stroke="#777" strokeWidth="2" strokeDasharray="5 4" />
          <path d="M382 134L372 725" stroke="#666" strokeWidth="2" />
          <path d="M58 507L440 514" stroke="#555" strokeWidth="3" />
          {phoneWicks.map(([x, a, b]) => <path key={x} d={`M${x} ${a}V${b}`} stroke="#444" strokeWidth="1.800" />)}
          {phoneGrey.map(([x, a, b]) => <rect key={x} x={x - 3} y={a} width="6" height={b - a} fill="#eee" stroke="#888" />)}
          {phoneBlack.map(([x, a, b]) => <rect key={x} x={x - 3.5} y={a} width="7" height={b - a} fill="#111" />)}
          <g fill="none" strokeWidth="2">
            <path d="M78 275L110 280 140 290 190 288 215 260 245 238 285 232 305 260 320 300 340 345 365 392" stroke="#ee4e4e" />
            <path d="M78 268L150 272 175 290 205 292 250 262 290 270 325 315 362 385" stroke="#f39191" />
            <path d="M76 290L120 288 150 292 200 280 300 280 318 318 362 318" stroke="#8a80e0" />
            <path d="M135 280H220L232 270H320" stroke="#7799e8" />
            <path d="M78 298L130 284H225L310 277 322 290H378" stroke="#c065d2" />
            <path d="M325 292V308H365V292M335 290V306M345 290V306M355 290V306" stroke="#b68be0" strokeDasharray="3 3" />
            <path d="M80 240L98 290 115 325 133 405 148 372 158 376 165 356 170 410" stroke="#6fce78" />
            <path d="M60 408L440 407" stroke="#e83a3a" strokeWidth="3" />
            <path d="M58 597L72 594 85 608 105 608 Q113 637 123 637 Q133 634 148 600L155 604 162 590 175 602 190 608 198 582 205 592 215 586 230 592 238 602 245 597 262 612 285 632 305 648 Q318 662 335 648L350 632 358 648" stroke="#8dbef0" />
          </g>
          <g fontFamily="Liberation Sans, sans-serif" fontSize="13" fill="#222">
            {prices.map((p, i) => <text key={p} x={386 - i} y={167 + i * 34.5}>{p}</text>)}
            <rect x="376" y="405" width="60" height="18" fill="#2e86e8" /><text x="379" y="419" fill="#fff">1572.000</text>
            <text x="379" y="446">1569.390</text><text x="379" y="482">1565.705</text>
            <text x="378" y="529">100.00</text><text x="377" y="581">70.00</text><text x="374" y="663">30.00</text><text x="372" y="716">0.00</text>
            <text x="84" y="161" fontSize="12">XAUUSD,M5</text><text x="84" y="177" fontSize="12" transform="rotate(-1 84 177)">1570.190 1570.190 1571.596 1572.095</text>
            <text x="59" y="525" fontSize="12">RSI(14) 33.55</text>
            <g transform="rotate(2.5 48 715)" fontSize="12"><text x="50" y="718">3 Mar 14:00</text><text x="132" y="718">13 Mar 15:00</text><text x="224" y="718">13 Mar 16:00</text><text x="316" y="718">13 Mar 17:00</text></g>
            <text x="109" y="68" fill="#fff" transform="rotate(-2 109 68)">16:18</text>
          </g>
          <path d="M40 737L440 755V820H40z" fill="#f3f3f3" />
          <path d="M372 57h4v-3h-4zM378 57h4v-6h-4z" fill="#fff" /><path d="M390 49q8-6 15 0l-7 8z" fill="#fff" /><rect x="412" y="47" width="16" height="8" rx="2" fill="#fff" />
        </g>
        <path d="M123 805V823L110 813z" fill="#fff" /><ellipse cx="232" cy="821" rx="8" ry="10" fill="#fff" /><rect x="342" y="820" width="15" height="17" fill="#fff" />
      </svg>
      <div className="relative flex h-full flex-col justify-between pt-[33px] pb-[41px]">
        <div className="ml-[31px] flex w-[114px] -rotate-1 items-center justify-between text-white">
          <svg width="8" height="8" viewBox="0 0 16 16" aria-hidden="true"><circle cx="8" cy="9" r="7" fill="#32915c" /><path d="M8 2l5 9H3z" fill="#f3cd45" /></svg>
          <span className="flex items-center gap-[7px]">
            <button aria-label="Crosshair"><svg {...iconProps}><path d="M9 1v6M9 11v6M1 9h6M11 9h6" stroke="#fff" strokeWidth="1.800" /></svg></button>
            <button aria-label="Indicators"><svg {...iconProps}><path d="M14 2q-4-1-5 4l-2 8q-1 3-4 2M6 8h6" fill="none" stroke="#fff" strokeWidth="1.800" /></svg></button>
            <button aria-label="Objects"><svg {...iconProps}><circle cx="5" cy="5" r="3" fill="#fff" /><path d="M8 5h9M1 10h8M12 9l3-2 3 5-4 3-4-3z" fill="none" stroke="#fff" strokeWidth="1.800" /></svg></button>
            <button aria-label="Period"><Clock size={8} /></button>
            <button aria-label="New order"><FilePlus size={9} /></button>
          </span>
        </div>
        <nav className="ml-[19px] flex w-[121px] rotate-3 items-center justify-between px-[2px] text-[#555]">
          <button aria-label="Quotes"><svg {...iconProps}><path d="M1 15l8-7M1 10v6h6" fill="none" stroke="#555" strokeWidth="3" /><path d="M10 2h6v6h-3l-3 4z" fill="none" stroke="#555" strokeWidth="1.800" /></svg></button>
          <button aria-label="Chart"><svg {...iconProps}><path d="M3 3v10M15 3v10M6 6v10M12 6v10" stroke="#1a7de0" strokeWidth="2.500" /><path d="M9 2v8" stroke="#1a7de0" strokeWidth="3.500" /></svg></button>
          <button aria-label="Trade"><svg {...iconProps}><path d="M2 15l4-5 3 2 7-9M12 3h4v4" fill="none" stroke="#555" strokeWidth="1.800" /><circle cx="3" cy="15" r="2" fill="#555" /></svg></button>
          <button aria-label="History"><svg {...iconProps}><path d="M2 2h14v14H2z" fill="none" stroke="#555" strokeWidth="2" /><path d="M2 10h4q3 5 6 0h4v6H2z" fill="#555" /></svg></button>
          <button aria-label="News"><svg {...iconProps}><path d="M4 1h13v15H1V5h3zM4 5v11M7 5h7M7 8h3v4H7zM12 8h2M12 11h2M7 14h7" fill="none" stroke="#555" strokeWidth="1.500" /></svg></button>
          <button aria-label="Messages" className="relative">
            <svg width="10" height="10" viewBox="0 0 18 18" aria-hidden="true"><path d="M9 1q8 0 8 7t-8 7q-2 0-4-1l-3 3 1-4q-2-2-2-5 0-7 8-7z" fill="#555" /><path d="M4 8h2M8 8h2M12 8h2" stroke="#fff" strokeWidth="2" /></svg>
            <span className="absolute -right-[4px] -bottom-px h-[6px] w-[6px] rounded-full bg-[#f59a1c] text-center text-[4px] leading-[6px] text-white">1</span>
          </button>
        </nav>
      </div>
    </aside>
  );
}

export default function App() {
  return (
    <div className="relative min-h-screen w-full overflow-hidden bg-black">
      <Hardware />
      <Laptop />
      <svg className="absolute left-[655px] top-[220px]" width="380" height="285" viewBox="655 220 380 285" aria-hidden="true">
        <defs>
          <linearGradient id="slab" x1="0" y1="0" x2="1" y2="1">
            <stop offset="0" stopColor="#5a5a5a" /><stop offset="0.15" stopColor="#484848" /><stop offset="1" stopColor="#3c3c3c" />
          </linearGradient>
        </defs>
        <path d="M686 229L1004 234Q1026 234 1028 256L1029 472Q1028 493 1008 494L690 498Q664 498 663 474L664 250Q665 229 686 229z" fill="url(#slab)" />
        <path d="M690 230L1004 234.500Q1026 235 1028 256" fill="none" stroke="#777" strokeWidth="0.800" strokeDasharray="16 5" />
        <circle cx="670" cy="363" r="1.500" fill="#333" stroke="#666" strokeWidth="0.500" />
      </svg>
      <Tablet />
      <Phone />
    </div>
  );
}
